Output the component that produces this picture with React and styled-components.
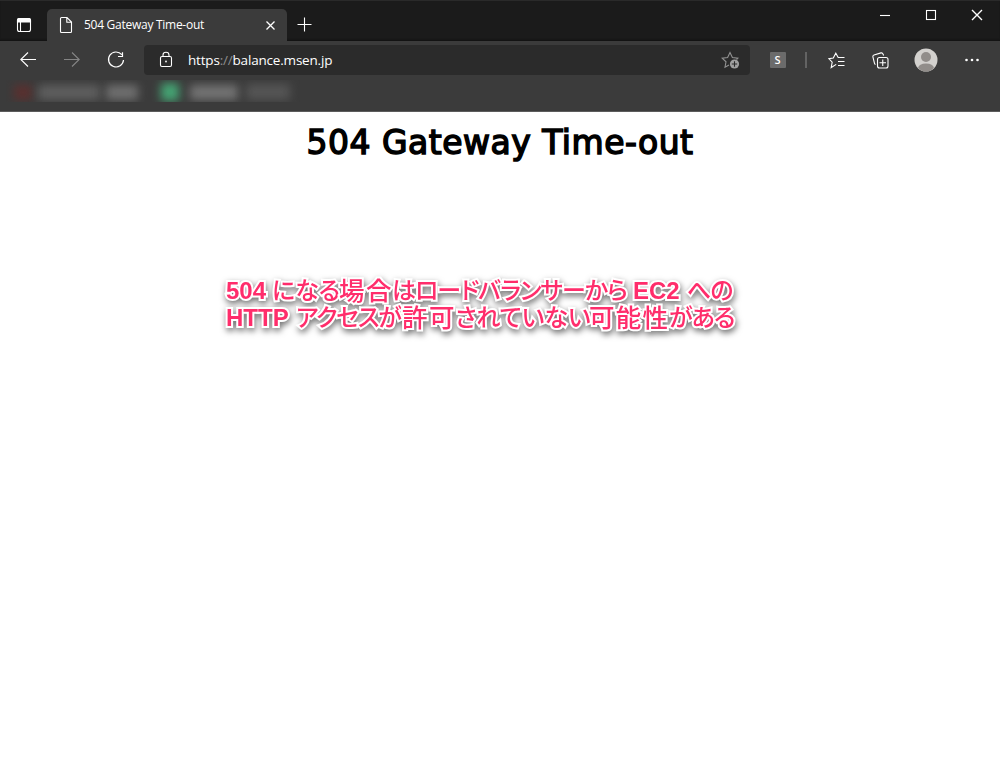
import React from 'react';
import styled, { createGlobalStyle } from 'styled-components';

const GlobalStyle = createGlobalStyle`
  * { box-sizing: border-box; }
  body { margin: 0; background: #fff; overflow: hidden; }
`;
const Window = styled.div`
  display: flex;
  flex-direction: column;
  width: 1000px;
  height: 766px;
  background: #fff;
  font-family: "Open Sans", "Noto Sans", sans-serif;
`;
const TitleBar = styled.header`
  display: flex;
  height: 41px;
  flex: none;
  background: #1b1b1b;
  border-top: 1px solid #2a2a2a;
  box-shadow: inset 0 -2px 2px -1px #111;
`;
const TabActions = styled.div`
  width: 47px;
  padding: 16px 0 0 16px;
`;
const Tab = styled.div`
  display: flex;
  align-items: center;
  width: 240px;
  height: 32px;
  margin-top: 8px;
  padding: 0 10px 0 12px;
  background: #3b3b3b;
  border-radius: 5px 5px 0 0;
  color: #fff;
`;
const TabTitle = styled.span`
  flex: 1;
  margin-left: 11px;
  font-size: 12px;
  letter-spacing: -0.27px;
  line-height: 16px;
  white-space: nowrap;
`;
const NewTab = styled.div`
  padding: 15px 0 0 9px;
`;
const Controls = styled.div`
  display: flex;
  margin-left: auto;
`;
const Control = styled.div`
  display: flex;
  justify-content: center;
  width: 46px;
  padding-top: 8px;
`;
const Toolbar = styled.div`
  display: flex;
  align-items: center;
  flex: none;
  height: 38px;
  background: #3b3b3b;
`;
const Tool = styled.div`
  display: flex;
  justify-content: center;
  align-items: center;
  flex: none;
  width: ${p => p.$w}px;
  height: 38px;
`;
const Address = styled.div`
  display: flex;
  align-items: center;
  flex: none;
  width: 606px;
  height: 30px;
  padding: 0 10px 0 15px;
  background: #2b2b2b;
  border-radius: 4px;
  color: #fff;
`;
const Url = styled.span`
  flex: 1;
  margin-left: 14px;
  font-size: 13.5px;
  letter-spacing: -0.19px;
  line-height: 20px;
`;
const Dim = styled.span`
  color: #8d8d8d;
`;
const Extension = styled.div`
  width: 16px;
  height: 16px;
  border-radius: 1px;
  background: #6b6b6b;
  color: #fff;
  font-size: 11px;
  font-weight: 600;
  line-height: 16px;
  text-align: center;
`;
const Divider = styled.div`
  flex: none;
  width: 2px;
  height: 16px;
  background: #636363;
`;
const Bookmarks = styled.div`
  flex: none;
  height: 33px;
  padding: 1px 0 0 6px;
  background: #3b3b3b;
  border-bottom: 1px solid #5c5c5c;
`;
const BookmarkStrip = styled.div`
  display: flex;
  align-items: center;
  width: 294px;
  height: 22px;
  padding-top: 2px;
  overflow: hidden;
`;
const Smudge = styled.div`
  flex: none;
  width: ${p => p.$w}px;
  height: ${p => p.$h || 15}px;
  margin-left: ${p => p.$gap}px;
  background: ${p => p.$color};
  filter: blur(5px);
`;
const Page = styled.main`
  flex: 1;
  display: flex;
  flex-direction: column;
`;
const Heading = styled.h1`
  margin: 8px 0 0;
  color: #000;
  font-family: "DejaVu Sans", sans-serif;
  font-size: 33px;
  font-weight: 400;
  -webkit-text-stroke: 1.5px #000;
  line-height: 46px;
  letter-spacing: 0.5px;
  text-align: center;
  white-space: nowrap;
`;
const Note = styled.div`
  margin: 111px 0 0 226px;
  color: #ff2d6b;
  font-family: "Liberation Sans", "Noto Sans CJK JP", sans-serif;
  font-size: 24px;
  font-weight: 700;
  line-height: 28px;
  -webkit-text-stroke: 4px #fff;
  paint-order: stroke fill;
  filter: drop-shadow(1px 3px 3px rgba(0, 0, 0, 0.55));
`;
const NoteLine = styled.div`
  display: flex;
  height: 27px;
  white-space: nowrap;
`;
const Latin = styled.span`
  flex: none;
  width: ${p => p.$w}px;
`;
const Japanese = styled.span`
  flex: none;
  margin-top: -2px;
  width: ${p => p.$w}px;
  font-family: "Noto Sans CJK JP", sans-serif;
  font-weight: 500;
  font-feature-settings: "palt";
  letter-spacing: ${p => p.$track || 0}px;
  line-height: 27px;
`;
const Kanji = styled(Japanese)`
  font-size: 25.5px;
`;

const Icon = ({ w = 16, h = w, color = '#fff', stroke = 1.1, children }) => (
  <svg width={w} height={h} viewBox={`0 0 ${w} ${h}`} fill="none" stroke={color} strokeWidth={stroke} display="block">
    {children}
  </svg>
);

export default function App() {
  return (
    <>
      <GlobalStyle />
      <Window>
        <TitleBar>
          <TabActions>
            <Icon>
              <rect x="1.5" y="1.5" width="13" height="13" rx="2" />
              <path d="M1.5 3Q1.5 1.5 3 1.5H13Q14.5 1.5 14.5 3V5H1.5Z" fill="#fff" />
              <path d="M4.5 5V14.5" />
            </Icon>
          </TabActions>
          <Tab>
            <Icon w={14} h={18}>
              <path d="M2.5 1.5H8L12.5 6V15.5Q12.5 16.5 11.5 16.5H2.5Q1.5 16.5 1.5 15.5V2.5Q1.5 1.5 2.5 1.5ZM7.8 1.5V6.3H12.5" />
            </Icon>
            <TabTitle>504 Gateway Time-out</TabTitle>
            <Icon w={13} stroke={1.3}><path d="M2.5 2.5L10.5 10.5M10.5 2.5L2.5 10.5" /></Icon>
          </Tab>
          <NewTab><Icon w={17}><path d="M8.5 1.5V15.5M1.5 8.5H15.5" /></Icon></NewTab>
          <Controls>
            <Control><Icon w={12}><path d="M1 6.5H11" /></Icon></Control>
            <Control><Icon w={12}><rect x="1.5" y="1.5" width="9" height="9" /></Icon></Control>
            <Control><Icon w={12} stroke={1.4}><path d="M1 1L11 11M11 1L1 11" /></Icon></Control>
          </Controls>
        </TitleBar>
        <Toolbar>
          <Tool $w={56}><Icon><path d="M16 7.5H.8M8 .5L.8 7.5L8 14.5" /></Icon></Tool>
          <Tool $w={32}><Icon color="#858585"><path d="M0 7.5H15.2M8 .5L15.2 7.5L8 14.5" /></Icon></Tool>
          <Tool $w={56}><Icon w={18} stroke={1.2}><path d="M14.8 3.7A7.5 7.5 0 1 0 16.5 9M15.5 1.2V5.5H11" /></Icon></Tool>
          <Address>
            <Icon w={15} h={18} stroke={1.1}>
              <rect x="1.5" y="5.5" width="11" height="10" rx="1.5" />
              <path d="M4 5.5V4Q4 1.2 7 1.2Q10 1.2 10 4V5.5" />
              <circle cx="7" cy="10.5" r=".9" fill="#fff" stroke="none" />
            </Icon>
            <Url>https<Dim>://</Dim>balance.msen.jp</Url>
            <Icon w={19} h={18} color="#929292">
              <path d="M8 14L4 16.2L5 10.8L1.2 7.2L6.6 6.5L9 1.5L11.4 6.5L16.8 7.2L15.5 8.5" />
              <circle cx="13.5" cy="13" r="4.6" fill="#a0a0a0" stroke="none" />
              <path d="M13.5 10.3V15.7M10.8 13H16.2" stroke="#2b2b2b" />
            </Icon>
          </Address>
          <Tool $w={55}><Extension>S</Extension></Tool>
          <Tool $w={2}><Divider /></Tool>
          <Tool $w={58}>
            <Icon w={17} h={17}>
              <path d="M8.2 12.4L3.2 15.5L4.2 10.2L.8 6.6L5.3 6L7.8 1.2L10.2 5.5H16.5M10 9.5H16.5M10 13.5H16.5" />
            </Icon>
          </Tool>
          <Tool $w={30}>
            <Icon w={17} h={17}>
              <path d="M3.5 12.5Q2.8 12.2 2.5 11.3L.9 4.8Q.7 3.4 2 3L9 .9Q10.5.6 11 2L11.6 3.5" />
              <rect x="5.5" y="5.5" width="10.5" height="10.5" rx="2" />
              <path d="M10.75 7.5V14M7.5 10.75H14" />
            </Icon>
          </Tool>
          <Tool $w={62}>
            <Icon w={24} stroke={0}>
              <circle cx="12" cy="12" r="11.5" fill="#d3d1ce" />
              <circle cx="12" cy="9" r="5" fill="#918d8a" />
              <path d="M4 20Q5 15.5 12 15.5T20 20Q16.5 23.5 12 23.5T4 20Z" fill="#918d8a" />
            </Icon>
          </Tool>
          <Tool $w={30}>
            <Icon w={16} stroke={0}>
              <circle cx="2.5" cy="8" r="1.3" fill="#fff" /><circle cx="8" cy="8" r="1.3" fill="#fff" /><circle cx="13.5" cy="8" r="1.3" fill="#fff" />
            </Icon>
          </Tool>
        </Toolbar>
        <Bookmarks>
          <BookmarkStrip>
            <Smudge $w={18} $gap={8} $color="#5a302f" />
            <Smudge $w={62} $gap={6} $color="#5f5f5f" />
            <Smudge $w={32} $gap={6} $color="#707070" />
            <Smudge $w={18} $gap={23} $h={18} $color="#45a574" />
            <Smudge $w={48} $gap={11} $color="#747474" />
            <Smudge $w={44} $gap={8} $h={16} $color="#555555" />
          </BookmarkStrip>
        </Bookmarks>
        <Page>
          <Heading>504 Gateway Time-out</Heading>
          <Note>
            <NoteLine>
              <Latin $w={46}>504</Latin>
              <Japanese $w={67}>になる</Japanese>
              <Kanji $w={53} $track={1.5}>場合</Kanji>
              <Japanese $w={23}>は</Japanese>
              <Japanese $w={218} $track={-0.9}>ロードバランサーから</Japanese>
              <Latin $w={54}>EC2</Latin>
              <Japanese $track={-1}>への</Japanese>
            </NoteLine>
            <NoteLine>
              <Latin $w={70}>HTTP</Latin>
              <Japanese $w={106} $track={-1.2}>アクセスが</Japanese>
              <Kanji $w={53} $track={1.5}>許可</Kanji>
              <Japanese $w={134}>されていない</Japanese>
              <Kanji $w={80} $track={1.3}>可能性</Kanji>
              <Japanese $track={-1}>がある</Japanese>
            </NoteLine>
          </Note>
        </Page>
      </Window>
    </>
  );
}
